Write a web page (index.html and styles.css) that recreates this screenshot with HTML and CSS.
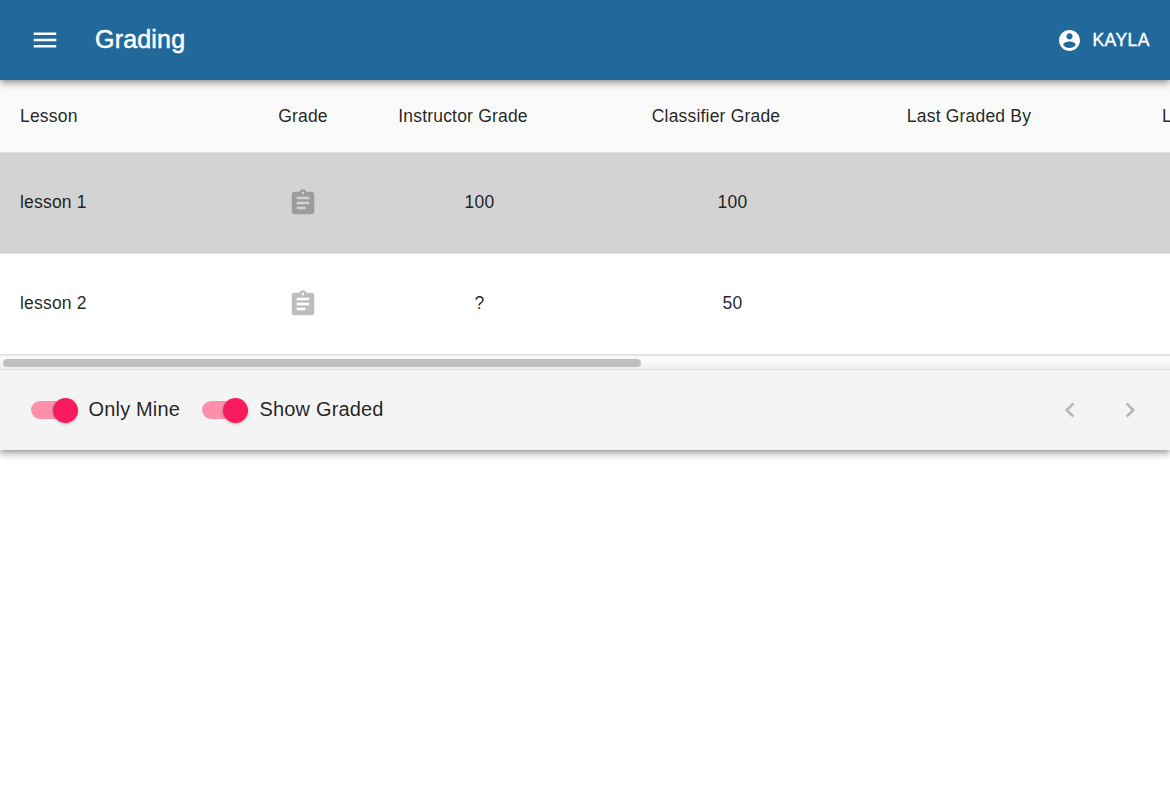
FILE: index.html
```html
<!DOCTYPE html>
<html lang="en">
<head>
<meta charset="utf-8">
<title>Grading</title>
<link rel="stylesheet" href="styles.css">
</head>
<body>
<header class="app-bar">
  <svg class="icon menu" viewBox="0 0 24 24"><path d="M3 18h18v-2H3v2zm0-5h18v-2H3v2zm0-7v2h18V6H3z"/></svg>
  <h1 class="title">Grading</h1>
  <div class="user">
    <svg class="account" viewBox="0 0 24 24"><path d="M12 2C6.48 2 2 6.48 2 12s4.48 10 10 10 10-4.48 10-10S17.52 2 12 2zm0 3c1.66 0 3 1.34 3 3s-1.34 3-3 3-3-1.34-3-3 1.34-3 3-3zm0 14.2c-2.5 0-4.71-1.28-6-3.22.03-1.99 4-3.08 6-3.08 1.99 0 5.97 1.09 6 3.08-1.29 1.94-3.5 3.22-6 3.22z"/></svg>
    <span class="name">KAYLA</span>
  </div>
</header>
<main class="panel">
  <div class="table">
    <div class="row head">
      <span class="lesson">Lesson</span><span>Grade</span><span class="sortable">Instructor Grade</span><span class="sortable">Classifier Grade</span><span class="sortable">Last Graded By</span><span class="last">L</span>
    </div>
    <div class="row graded">
      <span class="lesson">lesson 1</span>
      <svg class="icon clip" viewBox="0 0 24 24"><path d="M19 3h-4.18C14.4 1.84 13.3 1 12 1c-1.3 0-2.4.84-2.82 2H5c-1.1 0-2 .9-2 2v14c0 1.1.9 2 2 2h14c1.1 0 2-.9 2-2V5c0-1.1-.9-2-2-2zm-7 0c.55 0 1 .45 1 1s-.45 1-1 1-1-.45-1-1 .45-1 1-1zm2 14H7v-2h7v2zm3-4H7v-2h10v2zm0-4H7V7h10v2z"/></svg>
      <span>100</span><span>100</span>
    </div>
    <div class="row">
      <span class="lesson">lesson 2</span>
      <svg class="icon clip" viewBox="0 0 24 24"><path d="M19 3h-4.18C14.4 1.84 13.3 1 12 1c-1.3 0-2.4.84-2.82 2H5c-1.1 0-2 .9-2 2v14c0 1.1.9 2 2 2h14c1.1 0 2-.9 2-2V5c0-1.1-.9-2-2-2zm-7 0c.55 0 1 .45 1 1s-.45 1-1 1-1-.45-1-1 .45-1 1-1zm2 14H7v-2h7v2zm3-4H7v-2h10v2zm0-4H7V7h10v2z"/></svg>
      <span>?</span><span>50</span>
    </div>
  </div>
  <div class="scrollbar"><div class="scroll-thumb"></div></div>
  <footer class="toolbar">
    <label class="toggle mine"><span class="track"><span class="knob"></span></span><span class="label">Only Mine</span></label>
    <label class="toggle"><span class="track"><span class="knob"></span></span><span class="label">Show Graded</span></label>
    <div class="pager">
      <svg class="icon" viewBox="0 0 24 24"><path d="M15.41 7.41L14 6l-6 6 6 6 1.41-1.41L10.83 12z"/></svg>
      <svg class="icon" viewBox="0 0 24 24"><path d="M10 6L8.59 7.41 13.17 12l-4.58 4.59L10 18l6-6z"/></svg>
    </div>
  </footer>
</main>
</body>
</html>
```
FILE: styles.css
```css
* { box-sizing: border-box; }
body {
  margin: 0;
  min-height: 100vh;
  background: #fff;
  color: rgba(0, 0, 0, .87);
  font-family: "Liberation Sans", Arial, sans-serif;
}
.icon { width: 30px; height: 30px; flex: none; }
.app-bar {
  position: relative;
  z-index: 1;
  display: flex;
  align-items: center;
  height: 80px;
  padding: 0 20px 0 30px;
  background: #21699b;
  color: #fff;
  fill: #fff;
  box-shadow: 0 2px 5px -1px rgba(0,0,0,.25), 0 5px 6px rgba(0,0,0,.16), 0 1px 12px rgba(0,0,0,.12);
}
.title {
  margin: 0 0 3px 35px;
  font-size: 25px;
  font-weight: 400;
  line-height: 40px;
  letter-spacing: .19px;
  -webkit-text-stroke: .5px #fff;
}
.user { display: flex; align-items: center; margin-left: auto; gap: 10px; }
.account { width: 25px; height: 25px; margin-top: 1px; }
.name {
  font-size: 17.5px;
  letter-spacing: .5px;
  -webkit-text-stroke: .4px #fff;
}
.panel {
  height: 370px;
  background: #f4f4f4;
  box-shadow: 0 2px 5px -1px rgba(0,0,0,.25), 0 5px 6px rgba(0,0,0,.16), 0 1px 12px rgba(0,0,0,.12);
}
.table { overflow: hidden; background: #fff; }
.row {
  display: grid;
  grid-template-columns: 250px 106px 247px 259px 247px 61px;
  align-items: center;
  justify-items: center;
  height: 101px;
  padding-bottom: 1px;
  border-bottom: 1px solid #e0e0e0;
  font-size: 17.5px;
  line-height: 25px;
  letter-spacing: .19px;
}
.head { height: 73px; padding: 1px 0 0; background: #fafafa; }
.graded { background: #d3d3d3; }
.lesson { justify-self: start; padding-left: 20px; }
.sortable { padding-right: 33px; }
.last { justify-self: start; padding-left: 53px; }
.clip { fill: rgba(0, 0, 0, .26); }
.scrollbar {
  height: 14px;
  padding: 3px 3px 0;
  border-top: 1px solid #e8e8e8;
  background: linear-gradient(#fafafa, #fafafa 40%, #eee);
}
.scroll-thumb { width: 638px; height: 8px; border-radius: 4px; background: #c0c0c0; }
.toolbar {
  display: flex;
  align-items: center;
  height: 81px;
  padding: 0 25px 0 31px;
  border-top: 1px solid #ddd;
  background: #f4f4f4;
}
.toggle { display: flex; align-items: center; }
.track {
  display: flex;
  align-items: center;
  justify-content: flex-end;
  width: 43px;
  height: 18px;
  border-radius: 9px;
  background: #fa90ac;
}
.knob {
  flex: none;
  width: 25px;
  height: 25px;
  margin: 1px -4px 0 0;
  border-radius: 50%;
  background: #f71a5c;
  box-shadow: 0 1px 3px rgba(0,0,0,.25);
}
.label { margin: -2px 0 0 14.5px; font-size: 20px; line-height: 30px; letter-spacing: .17px; }
.mine { width: 171px; }
.mine + .toggle .track { width: 42px; }
.mine + .toggle .label { margin-left: 15.5px; }
.pager { display: flex; gap: 30px; margin-left: auto; fill: #b5b5b5; }
```
